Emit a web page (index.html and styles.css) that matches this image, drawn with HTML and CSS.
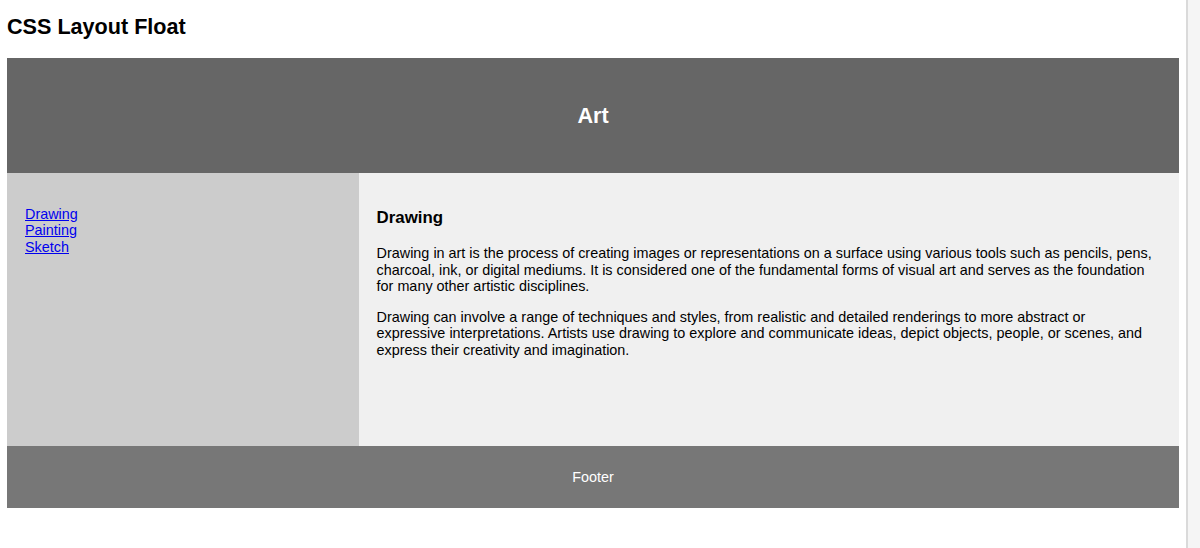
FILE: index.html
```html
<!DOCTYPE html>
<html lang="en">
<head>
    <meta charset="UTF-8">
    <meta name="viewport" content="width=device-width, initial-scale=1.0">
    <title>CSS Layout Float</title>
    <link rel="stylesheet" href="styles.css">
</head>
<body>
    <h2 class="page-title">CSS Layout Float</h2>

    <header class="site-header">
        <h2>Art</h2>
    </header>

    <section class="main">
        <nav class="side-nav">
            <ul>
                <li><a href="#">Drawing</a></li>
                <li><a href="#">Painting</a></li>
                <li><a href="#">Sketch</a></li>
            </ul>
        </nav>

        <article class="content">
            <h3>Drawing</h3>
            <p>Drawing in art is the process of creating images or representations on a surface using various tools such as pencils, pens, charcoal, ink, or digital mediums. It is considered one of the fundamental forms of visual art and serves as the foundation for many other artistic disciplines.</p>
            <p>Drawing can involve a range of techniques and styles, from realistic and detailed renderings to more abstract or expressive interpretations. Artists use drawing to explore and communicate ideas, depict objects, people, or scenes, and express their creativity and imagination.</p>
        </article>
    </section>

    <footer class="site-footer">
        <p>Footer</p>
    </footer>

    <!-- page scrollbar track, as it shows in the screenshot -->
    <div class="scroll-track"></div>
</body>
</html>
```

FILE: styles.css
```css
* {
    box-sizing: border-box;
}
body {
    margin: 0 21px 0 7px;
    font-family: "Liberation Sans", Arial, Helvetica, sans-serif;
    font-size: 14.4px;
    line-height: 16.4px;
    color: #000;
    background: #fff;
}
.page-title {
    margin: 14px 0 19px;
    font-size: 21.6px;
    line-height: 25px;
}
.site-header {
    display: flex;
    align-items: center;
    justify-content: center;
    height: 115px;
    background-color: #666;
    color: white;
}
.site-header h2 {
    margin: 0;
    font-size: 21.6px;
    line-height: 25px;
}
.main {
    display: flex;
    height: 273px;
}
.side-nav {
    width: 30%;
    padding: 18px;
    background: #ccc;
}
.side-nav ul {
    list-style-type: none;
    margin: 15px 0;
    padding: 0;
}
.side-nav a {
    color: #0000ee;
}
.content {
    width: 70%;
    padding: 18px 23px 18px 18px;
    background-color: #f0f0f0;
}
.content h3 {
    margin: 16.7px 0 18.2px;
    font-size: 16.85px;
    line-height: 19.5px;
}
.content p {
    margin: 14.4px 0;
}
.site-footer {
    padding: 9px;
    text-align: center;
    background-color: #777;
    color: white;
}
.site-footer p {
    margin: 14px 0;
    line-height: 16px;
}
.scroll-track {
    position: fixed;
    top: 0;
    right: 0;
    width: 14px;
    height: 100%;
    border-left: 2px solid #dadada;
    background: #f5f5f5;
}
```
